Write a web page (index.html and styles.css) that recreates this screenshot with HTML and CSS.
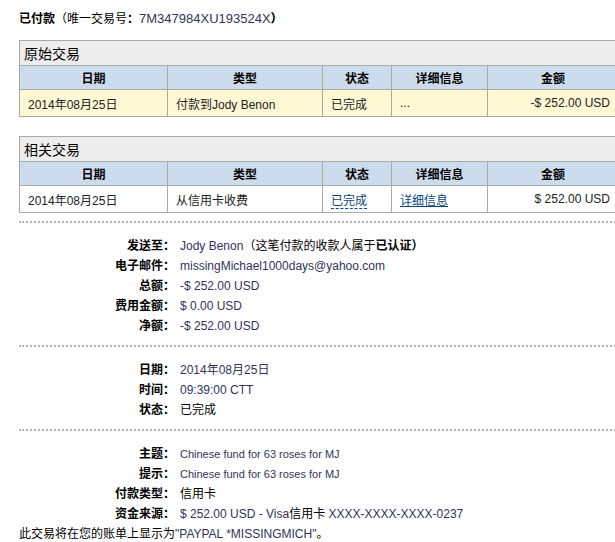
FILE: index.html
```html
<!DOCTYPE html>
<html lang="zh-CN">
<head>
    <meta charset="UTF-8">
    <title>交易详情</title>
    <link rel="stylesheet" href="styles.css">
</head>
<body>
    <div class="page">
        <h1 class="page-title">已付款<span class="txn-label">（唯一交易号<b>：</b></span><span class="txn-id">7M347984XU193524X</span><b>）</b></h1>

        <!-- 原始交易 -->
        <table class="txn-table">
            <colgroup>
                <col class="col-date"><col class="col-type"><col class="col-status"><col class="col-info"><col>
            </colgroup>
            <tr><td class="caption" colspan="5">原始交易</td></tr>
            <tr class="head">
                <th>日期</th>
                <th>类型</th>
                <th>状态</th>
                <th>详细信息</th>
                <th>金额</th>
            </tr>
            <tr class="row highlight">
                <td>2014年08月25日</td>
                <td>付款到Jody Benon</td>
                <td>已完成</td>
                <td class="muted">...</td>
                <td class="amount">-$ 252.00 USD</td>
            </tr>
        </table>

        <!-- 相关交易 -->
        <table class="txn-table related">
            <colgroup>
                <col class="col-date"><col class="col-type"><col class="col-status"><col class="col-info"><col>
            </colgroup>
            <tr><td class="caption" colspan="5">相关交易</td></tr>
            <tr class="head">
                <th>日期</th>
                <th>类型</th>
                <th>状态</th>
                <th>详细信息</th>
                <th>金额</th>
            </tr>
            <tr class="row">
                <td>2014年08月25日</td>
                <td>从信用卡收费</td>
                <td><a class="dash-link" href="#">已完成</a></td>
                <td><a class="link" href="#">详细信息</a></td>
                <td class="amount">$ 252.00 USD</td>
            </tr>
        </table>

        <div class="details">
            <div class="label">发送至：</div>
            <div class="value">Jody Benon<span class="note">（这笔付款的收款人属于<b>已认证</b><b>）</b></span></div>
            <div class="label">电子邮件：</div>
            <div class="value">missingMichael1000days@yahoo.com</div>
            <div class="label">总额：</div>
            <div class="value">-$ 252.00 USD</div>
            <div class="label">费用金额：</div>
            <div class="value">$ 0.00 USD</div>
            <div class="label">净额：</div>
            <div class="value">-$ 252.00 USD</div>
        </div>

        <div class="details">
            <div class="label">日期：</div>
            <div class="value">2014年08月25日</div>
            <div class="label">时间：</div>
            <div class="value">09:39:00 CTT</div>
            <div class="label">状态：</div>
            <div class="value plain">已完成</div>
        </div>

        <div class="details last">
            <div class="label">主题：</div>
            <div class="value small">Chinese fund for 63 roses for MJ</div>
            <div class="label">提示：</div>
            <div class="value small">Chinese fund for 63 roses for MJ</div>
            <div class="label">付款类型：</div>
            <div class="value plain">信用卡</div>
            <div class="label">资金来源：</div>
            <div class="value">$ 252.00 USD - Visa<span class="plain">信用卡</span> XXXX-XXXX-XXXX-0237</div>
        </div>

        <p class="statement">此交易将在您的账单上显示为<span class="value">"PAYPAL *MISSINGMICH"</span>。</p>
    </div>
</body>
</html>
```

FILE: styles.css
```css
html, body {
    margin: 0;
    padding: 0;
    background: #fff;
    overflow: hidden;
}

body {
    font-family: "Liberation Sans", Arial, "Noto Sans CJK SC", sans-serif;
    font-size: 12px;
    color: #000;
}

.page {
    padding: 10px 0 0 19px;
    width: 600px;
}

.page-title {
    margin: 0 0 12px;
    font-size: 12px;
    font-weight: bold;
    line-height: 18px;
}
.txn-label {
    font-weight: normal;
}
.txn-id {
    font-weight: normal;
    font-size: 13px;
    color: #33335a;
}

/* Transaction tables */
.txn-table {
    width: 600px;
    border-collapse: collapse;
    border: 1px solid #a9a9a9;
    margin-bottom: 19px;
    table-layout: fixed;
}
.txn-table.related {
    margin-bottom: 8px;
}
.txn-table td,
.txn-table th {
    border: 1px solid #a9a9a9;
    padding: 0 8px;
    white-space: nowrap;
}
.txn-table .caption {
    background: #ededed;
    font-size: 14px;
    height: 24px;
    padding-left: 4px;
}
.txn-table .head th {
    background: #cddced;
    font-weight: bold;
    height: 23px;
    text-align: center;
}
.txn-table .row td {
    height: 26px;
    color: #222;
}
.txn-table .highlight td {
    background: #fff8d4;
}
.col-date { width: 148px; }
.col-type { width: 155px; }
.col-status { width: 69px; }
.col-info { width: 96px; }

.txn-table .amount {
    text-align: right;
    color: #33335a;
}
.txn-table .muted {
    color: #777;
}

.link {
    color: #084482;
    text-decoration: underline;
}
.dash-link {
    color: #084482;
    text-decoration: none;
    border-bottom: 1px dashed #084482;
}

/* Detail blocks */
.details {
    display: grid;
    grid-template-columns: 156px 1fr;
    column-gap: 5px;
    padding: 13px 0 9px;
    border-top: 2px dotted #b4b4b4;
    line-height: 20px;
}
.details.last {
    padding-bottom: 0;
}
.label {
    text-align: right;
    font-weight: bold;
}
.value {
    color: #33335a;
}
.value.small {
    font-size: 11px;
}
.plain {
    color: #000;
}
.note {
    color: #000;
}

.statement {
    margin: 0;
    line-height: 20px;
}
```
